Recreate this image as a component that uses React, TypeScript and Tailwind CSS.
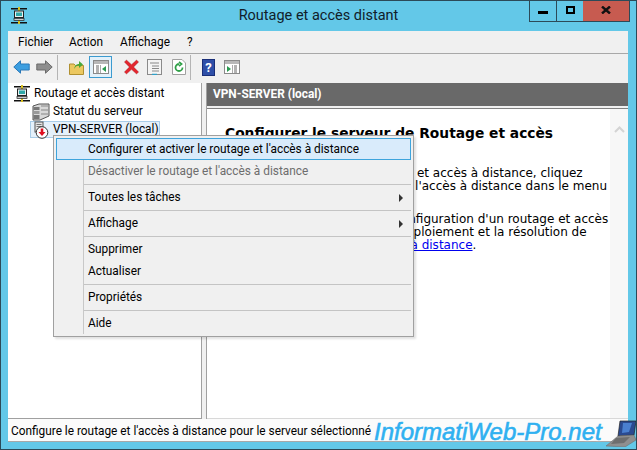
import React from 'react';

const ui = { fontFamily: 'Roboto, "Open Sans", sans-serif' };

function ServerNet({ size = 18 }: { size?: number }) {
  return (
    <svg width={size} height={size} viewBox="0 0 18 18">
      <rect x="1" y="1" width="16" height="1.5" fill="#111" />
      <rect x="1" y="15" width="16" height="1.5" fill="#111" />
      <rect x="8" y="0" width="2" height="4" fill="#d8c020" />
      <rect x="8" y="12" width="2" height="5" fill="#d8c020" />
      <rect x="4.5" y="4" width="9" height="6.5" fill="#e8f0f0" stroke="#222" />
      <rect x="6" y="5.5" width="6" height="3.5" fill="#30a8a8" />
      <rect x="4" y="11.5" width="10" height="2" fill="#ccc" stroke="#222" strokeWidth="0.7" />
    </svg>
  );
}

function ServerStack() {
  return (
    <svg width="18" height="18" viewBox="0 0 18 18">
      <path d="M1 3 L7 1 H17 V13 L8 17 H1 Z" fill="#d8d8d8" stroke="#555" />
      <rect x="1.5" y="4" width="6" height="3" fill="#777" />
      <rect x="1.5" y="8" width="6" height="3" fill="#999" />
      <rect x="1.5" y="12" width="6" height="4" fill="#777" />
      <path d="M9 3 H16 M9 7 H16 M9 11 H16" stroke="#888" />
    </svg>
  );
}

function ServerDown() {
  return (
    <svg width="18" height="18" viewBox="0 0 18 18">
      <rect x="3" y="1" width="8" height="10" fill="#e4e4e4" stroke="#555" />
      <path d="M4.5 3.5 H9.5 M4.5 5.5 H9.5" stroke="#777" />
      <circle cx="10" cy="11.5" r="5.8" fill="#fff" stroke="#333" />
      <path d="M8.7 7.5 H11.3 V11 H13.5 L10 15 L6.5 11 H8.7 Z" fill="#e01020" />
    </svg>
  );
}

function PanelIcon({ arrow, side }: { arrow: string; side: 'left' | 'right' }) {
  return (
    <svg width="16" height="14" viewBox="0 0 16 14">
      <rect x="0.5" y="0.5" width="15" height="13" fill="#fff" stroke="#8a8a8a" />
      <rect x="1" y="1" width="14" height="3" fill="#b8b8b8" />
      {side === 'left' ? (
        <>
          <path d="M3 6 H6 M3 8 H6 M3 10 H6 M3 12 H6" stroke="#666" />
          <path d="M7.5 5 V13" stroke="#aaa" />
          <path d="M13 6 V12 L9 9 Z" fill={arrow} />
        </>
      ) : (
        <>
          <path d="M10 6 H13 M10 8 H13 M10 10 H13 M10 12 H13" stroke="#666" />
          <path d="M8.5 5 V13" stroke="#aaa" />
          <path d="M3 6 V12 L7 9 Z" fill={arrow} />
        </>
      )}
    </svg>
  );
}

function Arrow({ color, edge, flip }: { color: string; edge: string; flip?: boolean }) {
  return (
    <svg width="17" height="14" viewBox="0 0 17 14" className={flip ? '-scale-x-100' : ''}>
      <path d="M0.8 7 L7.5 0.8 V4 H16.2 V10 H7.5 V13.2 Z" fill={color} stroke={edge} />
    </svg>
  );
}

function Sep() {
  return <div className="w-px h-[25px] bg-[#b4b4b4]" />;
}

function MenuRow({ label, disabled, sub }: { label: string; disabled?: boolean; sub?: boolean }) {
  return (
    <div className="ml-[27px] h-[22px] pl-[4px] pr-[8px] pt-[1px] border-l border-[#c8c8c8] flex items-center justify-between">
      <span className={disabled ? 'text-[#6d6d6d]' : 'text-black'}>{label}</span>
      {sub && <div className="w-0 h-0 border-y-[4px] border-y-transparent border-l-[4px] border-l-[#333]" />}
    </div>
  );
}

function MenuSep() {
  return (
    <div className="ml-[27px] h-[4px] border-l border-[#c8c8c8] flex items-center">
      <div className="h-px w-full bg-[#c4c4c4]" />
    </div>
  );
}

export default function App() {
  return (
    <div
      className="relative w-[637px] h-[450px] overflow-hidden bg-[#63c8e8] border border-[#2c4a58] text-[11.85px] text-black flex flex-col"
      style={ui}
    >
      {/* title bar */}
      <div className="h-[30px] shrink-0 relative flex items-center justify-center text-[14.5px] text-[#10202a]">
        <div className="absolute left-[9px] top-[6px]">
          <ServerNet />
        </div>
        <span className="-mt-[1px]">Routage et accès distant</span>
        <div className="absolute right-[6px] top-0 h-[21px] flex border border-t-0 border-[#2c4a58]">
          <div className="w-[27px] flex items-center justify-center border-r border-[#2c4a58]">
            <div className="w-[10px] h-[3px] bg-black mt-[3px]" />
          </div>
          <div className="w-[26px] flex items-center justify-center">
            <div className="w-[9px] h-[8px] border-2 border-black -mt-[2px]" />
          </div>
          <div className="w-[46px] bg-[#c75b50] flex items-center justify-center">
            <svg width="10" height="8" viewBox="0 0 10 8" className="-mt-[2px]">
              <path d="M1 0.5 L9 7.5 M9 0.5 L1 7.5" stroke="#111" strokeWidth="2.4" />
            </svg>
          </div>
        </div>
      </div>

      {/* window body */}
      <div className="flex-1 mx-[7px] mr-[8px] flex flex-col bg-[#f0f0f0]">
        <div className="h-[23px] shrink-0 flex items-center pl-[10px] pt-[1px] border-b border-[#a8a8a8]">
          <span className="w-[51px]">Fichier</span>
          <span className="w-[51px]">Action</span>
          <span className="w-[67px]">Affichage</span>
          <span>?</span>
        </div>

        <div className="h-[29px] shrink-0 flex items-center pl-[5px] pb-[3px]">
          <Arrow color="#3c9ee0" edge="#2a78b8" />
          <div className="w-[6px]" />
          <Arrow color="#8e8e8e" edge="#6a6a6a" flip />
          <div className="w-[4px]" />
          <Sep />
          <div className="w-[11px]" />
          <svg width="15" height="15" viewBox="0 0 15 15">
            <path d="M0.5 4 H5 L6.5 5.5 H14.5 V14.5 H0.5 Z" fill="#ecc860" stroke="#b09030" />
            <path d="M5 9 C6 5 8 4 10 4 V1 L14 4.5 L10 8 V5.5 C8 5.5 6.5 6.5 5 9 Z" fill="#48a838" />
          </svg>
          <div className="w-[5px]" />
          <div className="w-[23px] h-[22px] border border-[#3c9bd0] bg-[#e3f1fa] flex items-center justify-center">
            <PanelIcon arrow="#2a9a50" side="left" />
          </div>
          <div className="w-[11px]" />
          <svg width="17" height="16" viewBox="0 0 17 16">
            <path d="M1 3 L3.5 0.8 L8.5 5.2 L13.5 0.8 L16 3 L11 8 L16 13 L13.5 15.2 L8.5 10.8 L3.5 15.2 L1 13 L6 8 Z" fill="#e02830" stroke="#c0c0c0" strokeWidth="0.5" />
          </svg>
          <div className="w-[7px]" />
          <svg width="15" height="16" viewBox="0 0 15 16">
            <rect x="0.5" y="0.5" width="14" height="15" fill="#f4f4f4" stroke="#8a8a8a" />
            <path d="M3 4 H12 M5 7 H12 M5 9.5 H12 M5 12 H12" stroke="#888" />
            <path d="M5 15.5 H10" stroke="#30a0c8" strokeWidth="1.5" />
          </svg>
          <div className="w-[10px]" />
          <svg width="14" height="16" viewBox="0 0 14 16">
            <path d="M0.5 0.5 H10 L13.5 4 V15.5 H0.5 Z" fill="#fff" stroke="#a0a0a0" />
            <path d="M10.5 8.5 A3.5 3.5 0 1 1 7 5 M7 3 L9.5 5 L7 7" fill="none" stroke="#30a048" strokeWidth="1.8" />
          </svg>
          <div className="w-[4px]" />
          <Sep />
          <div className="w-[11px]" />
          <div className="w-[13px] h-[17px] bg-[#2f4fa8] border border-[#1a2f78] text-white font-bold text-[13px] leading-[15px] text-center">
            ?
          </div>
          <div className="w-[9px]" />
          <PanelIcon arrow="#2a9a50" side="right" />
        </div>

        {/* panes */}
        <div className="flex-1 flex min-h-0">
          <div className="w-[194px] bg-white border-r border-b border-[#a0a0a0] pt-[2px] pl-[5px] whitespace-nowrap">
            <div className="h-[18px] flex items-center gap-[3px]">
              <ServerNet />
              <span>Routage et accès distant</span>
            </div>
            <div className="h-[18px] flex items-center gap-[3px] pl-[19px]">
              <ServerStack />
              <span>Statut du serveur</span>
            </div>
            <div className="ml-[17px] h-[17px] w-[130px] flex items-center gap-[3px] pl-[1px] bg-[#e5f1fb] border border-[#a9cde8]">
              <ServerDown />
              <span>VPN-SERVER (local)</span>
            </div>
          </div>
          <div className="w-[4px]" />
          <div className="flex-1 flex flex-col min-w-0 border-l border-[#a0a0a0]">
            <div className="h-[23px] bg-[#696969] text-white font-bold flex items-center pl-[6px] pt-[1px] shrink-0">
              VPN-SERVER (local)
            </div>
            <div className="h-[2px] shrink-0" />
            <div className="flex-1 flex bg-white border-t border-[#808080] border-b-[#d8d8d8] border-b min-h-0">
              <div
                className="flex-1 pl-[18px] pt-[14px] text-[12px] leading-[13px] whitespace-nowrap overflow-hidden"
                style={{ fontFamily: '"DejaVu Sans", Verdana, sans-serif' }}
              >
                <div className="font-bold text-[13.8px] leading-[20px] mb-[24px]">
                  Configurer le serveur de Routage et accès
                </div>
                <div>Pour configurer tout le Routage et accès à distance, cliquez</div>
                <div>Configurer, initier le routage et l'accès à distance dans le menu</div>
                <div className="h-[20px]" />
                <div>Pour obtenir de l'aide sur la configuration d'un routage et accès</div>
                <div>à distance, ainsi que pour le déploiement et la résolution de</div>
                <div>
                  pannes, voir <span className="text-[#0000ee] underline">Routage et accès à distance</span>.
                </div>
              </div>
              <div className="w-[18px] bg-[#f7f7f7] shrink-0 flex justify-center pt-[17px]">
                <svg width="11" height="7" viewBox="0 0 11 7">
                  <path d="M1 6 L5.5 1.5 L10 6" fill="none" stroke="#d4d4d4" strokeWidth="2" />
                </svg>
              </div>
            </div>
          </div>
        </div>

        {/* status */}
        <div className="h-[23px] shrink-0 bg-[#fbfbfb] border-b border-[#a8a8a8] flex items-center pl-[3px] pt-[4px]">
          Configure le routage et l'accès à distance pour le serveur sélectionné
        </div>
      </div>
      <div className="h-[7px] shrink-0" />

      {/* context menu */}
      <div className="absolute left-[52px] top-[134px] w-[361px] h-[202px] bg-[#f0f0f0] border border-[#a0a0a0] p-[2px] shadow-[2px_2px_2px_rgba(0,0,0,0.12)]">
        <div className="h-[22px] bg-[#d9ebfb] border border-[#3ea4dc] flex items-center pl-[31px] pt-[1px]">
          Configurer et activer le routage et l'accès à distance
        </div>
        <MenuRow label="Désactiver le routage et l'accès à distance" disabled />
        <MenuSep />
        <MenuRow label="Toutes les tâches" sub />
        <MenuSep />
        <MenuRow label="Affichage" sub />
        <MenuSep />
        <MenuRow label="Supprimer" />
        <MenuRow label="Actualiser" />
        <MenuSep />
        <MenuRow label="Propriétés" />
        <MenuSep />
        <MenuRow label="Aide" />
      </div>

      {/* watermark */}
      <div className="absolute left-[373px] top-[416px] flex items-center">
        <span
          className="text-[24px] italic text-[#2fb0f0] leading-[30px]"
          style={{ fontFamily: '"Liberation Sans", sans-serif', WebkitTextStroke: '0.6px #2fb0f0', textShadow: '0 0 2px #fff, 0 0 2px #fff' }}
        >
          InformatiWeb-Pro.net
        </span>
      </div>
      <div className="absolute left-[604px] top-[419px]">
        <svg width="32" height="27" viewBox="0 0 32 27">
          <path d="M15 1 L31 1 L29 15 L13 16 Z" fill="#2a4a90" stroke="#222" strokeWidth="0.7" />
          <path d="M18 3 L27 3 L24 12 L17 13 Z" fill="#4a80d0" />
          <path d="M13 16 L29 15 L31 20 L20 27 L1 26 Z" fill="#8f8f8f" stroke="#666" strokeWidth="0.5" />
          <path d="M11 18 L25 17 L19 23 L6 24 Z" fill="#6e6e6e" />
        </svg>
      </div>
    </div>
  );
}
